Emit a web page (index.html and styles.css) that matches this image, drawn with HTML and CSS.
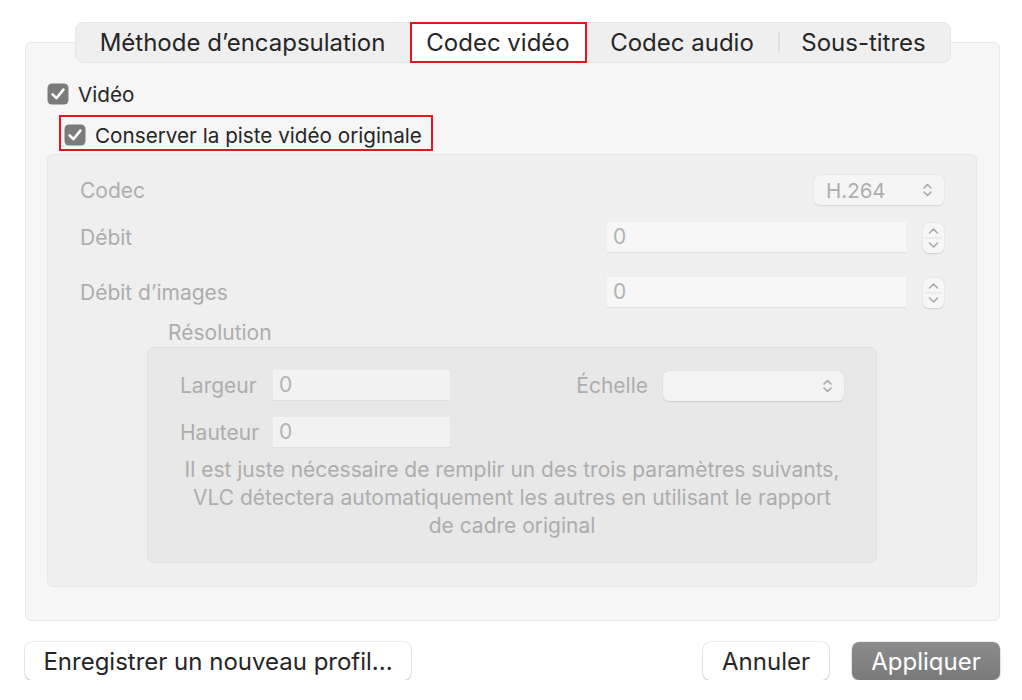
FILE: index.html
```html
<!DOCTYPE html>
<html lang="fr">
<head>
    <meta charset="UTF-8">
    <title>Codec vidéo</title>
    <link rel="stylesheet" href="styles.css">
</head>
<body>
    <div class="window">
        <div class="tabs">
            <div class="tab tab-1">Méthode d’encapsulation</div>
            <div class="tab tab-2 active">Codec vidéo</div>
            <div class="tab tab-3">Codec audio</div>
            <div class="tab tab-4">Sous-titres</div>
        </div>

        <div class="panel">
            <div class="check">
                <svg class="box" width="22" height="22" viewBox="0 0 22 22"><rect x="0.5" y="0.5" width="21" height="21" rx="4.5" fill="#7b7b7b"/><path d="M5.6 11.4 L9.4 15.2 L16.4 6.6" fill="none" stroke="#fff" stroke-width="2.6" stroke-linecap="round" stroke-linejoin="round"/></svg>
                <span>Vidéo</span>
            </div>

            <div class="highlight">
                <div class="check">
                    <svg class="box" width="22" height="22" viewBox="0 0 22 22"><rect x="0.5" y="0.5" width="21" height="21" rx="4.5" fill="#7b7b7b"/><path d="M5.6 11.4 L9.4 15.2 L16.4 6.6" fill="none" stroke="#fff" stroke-width="2.6" stroke-linecap="round" stroke-linejoin="round"/></svg>
                    <span>Conserver la piste vidéo originale</span>
                </div>
            </div>

            <div class="group">
                <div class="row row-codec">
                    <span class="label">Codec</span>
                    <div class="popup popup-codec">
                        <span>H.264</span>
                        <svg width="9" height="14" viewBox="0 0 9 14"><path d="M1 5 L4.5 1.5 L8 5 M1 9 L4.5 12.5 L8 9" fill="none" stroke="#a8a8a8" stroke-width="1.6" stroke-linecap="round" stroke-linejoin="round"/></svg>
                    </div>
                </div>
                <div class="row row-rate">
                    <span class="label">Débit</span>
                    <div class="field field-wide">0</div>
                    <div class="stepper">
                        <svg width="21" height="30" viewBox="0 0 21 30"><path d="M6.5 10 L10.5 6 L14.5 10" fill="none" stroke="#a8a8a8" stroke-width="1.6" stroke-linecap="round" stroke-linejoin="round"/><path d="M2 15 H19" stroke="#e2e2e2" stroke-width="1"/><path d="M6.5 20 L10.5 24 L14.5 20" fill="none" stroke="#a8a8a8" stroke-width="1.6" stroke-linecap="round" stroke-linejoin="round"/></svg>
                    </div>
                </div>
                <div class="row row-fps">
                    <span class="label">Débit d’images</span>
                    <div class="field field-wide">0</div>
                    <div class="stepper">
                        <svg width="21" height="30" viewBox="0 0 21 30"><path d="M6.5 10 L10.5 6 L14.5 10" fill="none" stroke="#a8a8a8" stroke-width="1.6" stroke-linecap="round" stroke-linejoin="round"/><path d="M2 15 H19" stroke="#e2e2e2" stroke-width="1"/><path d="M6.5 20 L10.5 24 L14.5 20" fill="none" stroke="#a8a8a8" stroke-width="1.6" stroke-linecap="round" stroke-linejoin="round"/></svg>
                    </div>
                </div>

                <div class="res-title">Résolution</div>
                <div class="res-box">
                    <div class="res-row">
                        <span class="label res-label">Largeur</span>
                        <div class="field field-small">0</div>
                        <span class="label scale-label">Échelle</span>
                        <div class="popup popup-scale">
                            <span></span>
                            <svg width="9" height="14" viewBox="0 0 9 14"><path d="M1 5 L4.5 1.5 L8 5 M1 9 L4.5 12.5 L8 9" fill="none" stroke="#a8a8a8" stroke-width="1.6" stroke-linecap="round" stroke-linejoin="round"/></svg>
                        </div>
                    </div>
                    <div class="res-row res-row-2">
                        <span class="label res-label">Hauteur</span>
                        <div class="field field-small">0</div>
                    </div>
                    <p class="hint">Il est juste nécessaire de remplir un des trois paramètres suivants,<br>VLC détectera automatiquement les autres en utilisant le rapport<br>de cadre original</p>
                </div>
            </div>
        </div>

        <div class="actions">
            <button class="btn btn-save">Enregistrer un nouveau profil...</button>
            <div class="actions-right">
                <button class="btn btn-cancel">Annuler</button>
                <button class="btn btn-apply">Appliquer</button>
            </div>
        </div>
    </div>
</body>
</html>
```

FILE: styles.css
```css
html {
    background: #fff;
}
body {
    margin: 0;
    font-family: Inter, "Noto Sans", sans-serif;
    color: #262626;
}
.window {
    padding: 22px 22px 0 25px;
}

/* segmented tabs */
.tabs {
    position: relative;
    z-index: 1;
    display: flex;
    width: 876px;
    height: 41px;
    margin: 0 auto -21px;
    background: #efefef;
    border: 1px solid #e6e6e6;
    box-sizing: border-box;
    border-radius: 8px;
}
.tab {
    display: flex;
    align-items: center;
    justify-content: center;
    font-size: 24px;
    color: #262626;
    box-sizing: border-box;
    position: relative;
}
.tab-1 { width: 334px; }
.tab-2 { width: 177px; }
.tab-3 { width: 191px; }
.tab-4 { width: 172px; }
.tab-4::before {
    content: "";
    position: absolute;
    left: 0;
    top: 9px;
    bottom: 9px;
    width: 2px;
    background: #e0e0e0;
}
.tab.active {
    background: #fff;
    border: 2px solid #e8141b;
    margin: -1px 0;
    height: 41px;
}

.panel {
    background: #f6f6f6;
    border: 1px solid #e8e8e8;
    border-radius: 6px;
    padding: 40px 22px 33px 21px;
}

.check {
    display: flex;
    align-items: center;
    gap: 9px;
    height: 22px;
    font-size: 20.7px;
    color: #262626;
}
.check .box {
    flex: none;
}
.highlight {
    width: 374px;
    box-sizing: border-box;
    margin: 10px 0 0 12px;
    padding: 7px 0 3px 3px;
    border: 2px solid #e8141b;
}

/* disabled video settings */
.group {
    margin-top: 3px;
    background: #efefef;
    border: 1px solid #e6e6e6;
    border-radius: 6px;
    padding: 20px 32px 23px 32px;
}
.row {
    display: flex;
    align-items: center;
}
.row-codec {
    height: 30px;
    justify-content: space-between;
}
.row-rate {
    height: 31px;
    margin-top: 17px;
}
.row-fps {
    height: 31px;
    margin-top: 24px;
}
.label {
    font-size: 21px;
    color: #adadad;
}
.row .label {
    flex: 1;
}
.popup {
    display: flex;
    align-items: center;
    justify-content: space-between;
    height: 30px;
    box-sizing: border-box;
    background: #f5f5f5;
    border-radius: 6px;
    box-shadow: 0 0.5px 1.5px rgba(0, 0, 0, 0.12);
    padding: 0 12px 0 12px;
    font-size: 20.5px;
    color: #adadad;
}
.popup-codec {
    width: 130px;
}
.popup-scale {
    width: 181px;
    background: #f3f3f3;
}
.field {
    height: 31px;
    box-sizing: border-box;
    background: #f7f7f7;
    border-bottom: 1px solid #dedede;
    padding: 2px 0 0 6px;
    font-size: 21px;
    color: #b3b3b3;
}
.field-wide {
    width: 299px;
}
.field-small {
    width: 177px;
    background: #f2f2f2;
}
.stepper {
    width: 21px;
    height: 30px;
    margin-left: 17px;
    background: #f6f6f6;
    border-radius: 6px;
    box-shadow: 0 0.5px 1.5px rgba(0, 0, 0, 0.15);
}
.stepper svg {
    display: block;
}

.res-title {
    margin: 14px 0 0 88px;
    height: 25px;
    line-height: 22px;
    font-size: 21px;
    color: #adadad;
}
.res-box {
    margin: 0 67px;
    background: #e8e8e8;
    border: 1px solid #e0e0e0;
    border-radius: 7px;
    padding: 22px 32px 22px 32px;
}
.res-row {
    display: flex;
    align-items: center;
    height: 31px;
}
.res-row-2 {
    margin-top: 16px;
}
.res-label {
    width: 93px;
}
.scale-label {
    margin-left: auto;
    margin-right: 15px;
}
.hint {
    margin: 8px 0 0;
    text-align: center;
    font-size: 21px;
    line-height: 28px;
    color: #adadad;
}

/* bottom buttons */
.actions {
    display: flex;
    justify-content: space-between;
    margin-top: 21px;
}
.actions-right {
    display: flex;
    gap: 23px;
}
.btn {
    height: 38px;
    border: none;
    border-radius: 7px;
    font-family: Inter, "Noto Sans", sans-serif;
    font-size: 24px;
    color: #262626;
    background: #fff;
    box-shadow: 0 0 0 0.5px rgba(0, 0, 0, 0.12), 0 1px 2px rgba(0, 0, 0, 0.2);
    padding: 0;
}
.btn-save {
    width: 386px;
}
.btn-cancel {
    width: 126px;
}
.btn-apply {
    width: 148px;
    color: #fff;
    background: linear-gradient(#8c8c8c, #7a7a7a);
}
```
